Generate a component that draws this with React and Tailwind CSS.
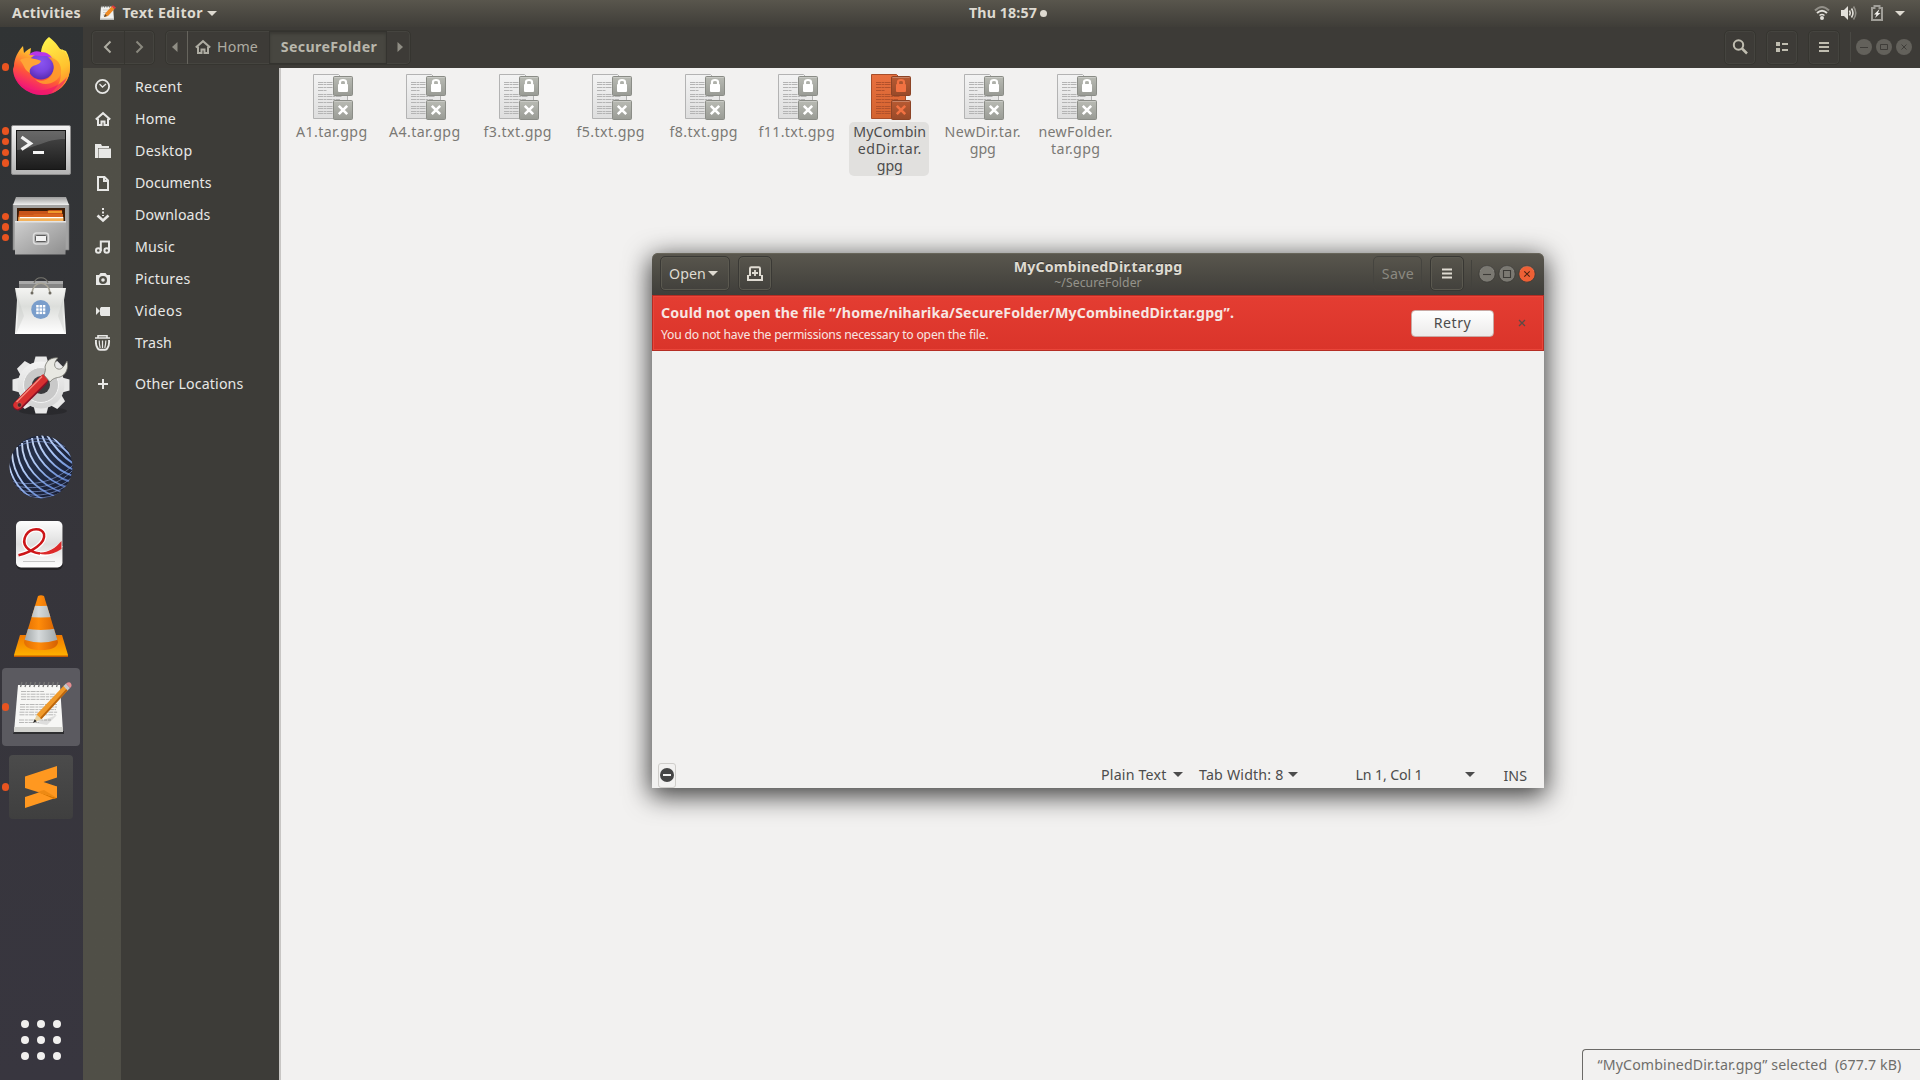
import { useLayoutEffect, useRef, useState } from "react";

/* Single line of text, tracked so that it fills the given width. */
function T({ w, className = "", children }) {
  const ref = useRef(null);
  const [spacing, setSpacing] = useState(0);
  useLayoutEffect(() => {
    const natural = ref.current.getBoundingClientRect().width;
    setSpacing((w + 1.5 - natural) / children.length);
  }, [w, children]);
  return (
    <span className={"block shrink-0 whitespace-pre " + className} style={{ width: w + 1.5 }}>
      <span ref={ref} className="inline-block" style={{ letterSpacing: spacing }}>
        {children}
      </span>
    </span>
  );
}

function Down({ className = "" }) {
  return (
    <svg className={"shrink-0 " + className} width="10" height="5" viewBox="0 0 10 5">
      <path d="M0 0h10L5 5z" fill="currentColor" />
    </svg>
  );
}

/* ---------- dock artwork ---------- */
function Firefox() {
  return (
    <svg width="64" height="64" viewBox="0 0 64 64">
      <defs>
        <linearGradient id="ffA" x1=".8" y1="0" x2=".3" y2="1">
          <stop offset="0" stopColor="#fff44f" />
          <stop offset=".35" stopColor="#ffb02e" />
          <stop offset=".62" stopColor="#ff5a36" />
          <stop offset=".85" stopColor="#f5246a" />
          <stop offset="1" stopColor="#e0128a" />
        </linearGradient>
        <linearGradient id="ffB" x1=".4" y1="0" x2=".7" y2="1">
          <stop offset="0" stopColor="#fff04a" />
          <stop offset=".6" stopColor="#ffc22e" />
          <stop offset="1" stopColor="#ff7a2a" />
        </linearGradient>
        <radialGradient id="ffC" cx=".5" cy=".35" r=".7">
          <stop offset="0" stopColor="#8a55f0" />
          <stop offset=".5" stopColor="#7a44e0" />
          <stop offset="1" stopColor="#5128a8" />
        </radialGradient>
      </defs>
      <path d="M5 31C5 24 9 16 14 11l1 7c2-2 4-4 7-5l-1 7c5-1 9-1 12 0L51 14l6 2c3 5 4 10 4 16 0 16-12 28-28 28S4 47 4 34z" fill="url(#ffA)" />
      <path d="M40 2c8 6 9 10 13 14l1 1-1-3c6 5 8 12 8 18 0 13-8 23-19 26 7-6 10-12 10-20 0-9-4-15-11-19-4-1-9 0-9 0 0-7 3-13 8-17z" fill="url(#ffB)" />
      <circle cx="32" cy="31.5" r="13" fill="url(#ffC)" />
      <path d="M20 20c3-4 8-4.500 12-3 6 0 10 3 12 8-5-5-9-4-12-4z" fill="#b835e8" />
      <path d="M11 25c4-3 11-2 15-1 3 1 5 1 6 2-1 3-5 4-8 5-3 2-4 4-3 7-6-3-5-7-10-13z" fill="#ffa436" />
      <path d="M39 22c6 5 8 12 3 19-4 5-11 6-16 3 7 9 23 5 26-6 1-9-4-15-13-16z" fill="#ff9a2c" opacity=".9" />
      <path d="M5 40c6 12 18 17 30 15 10-2 18-7 23-13-4 11-13 18-25 18S8 51 5 40z" fill="#f0146c" opacity=".6" />
    </svg>
  );
}

function Terminal() {
  return (
    <svg width="64" height="64" viewBox="0 0 64 64">
      <defs>
        <linearGradient id="tmA" x1="0" y1="0" x2="0" y2="1">
          <stop offset="0" stopColor="#f4f4f4" />
          <stop offset="1" stopColor="#b4b4b4" />
        </linearGradient>
        <linearGradient id="tmB" x1="0" y1="0" x2="0" y2="1">
          <stop offset="0" stopColor="#4a4a4a" />
          <stop offset="1" stopColor="#1c1c1c" />
        </linearGradient>
      </defs>
      <rect x="2.500" y="10.500" width="59" height="49" rx="1.500" fill="url(#tmA)" stroke="#8d8d8d" />
      <rect x="7" y="15" width="50" height="40" fill="#161616" />
      <rect x="8" y="16" width="48" height="38" fill="url(#tmB)" />
      <path d="M8 16h48v8C36 24 26 34 8 35z" fill="#fff" opacity=".17" />
      <path d="M12.500 22l9 6.500-9 6" fill="none" stroke="#f2f2f2" strokeWidth="3.300" />
      <rect x="24" y="36" width="11" height="3" fill="#f5f5f5" />
    </svg>
  );
}

function Files() {
  return (
    <svg width="64" height="64" viewBox="0 0 64 64">
      <defs>
        <linearGradient id="flA" x1="0" y1="0" x2="1" y2="1">
          <stop offset="0" stopColor="#cfcfcf" />
          <stop offset="1" stopColor="#8e8e8e" />
        </linearGradient>
        <linearGradient id="flB" x1="0" y1="0" x2="0" y2="1">
          <stop offset="0" stopColor="#9c9c9c" />
          <stop offset="1" stopColor="#efefef" />
        </linearGradient>
      </defs>
      <path d="M4 9h56v46H4z" fill="#a3a3a3" stroke="#777" strokeWidth=".6" />
      <path d="M7 2h50l3 8H4z" fill="url(#flB)" />
      <path d="M8 13h48v16H8z" fill="#3a1c08" />
      <path d="M10 16h28l2-1h13l1 12H9z" fill="#c8541a" />
      <path d="M39 16h14v2H39z" fill="#f09a2c" />
      <path d="M10 20h14l1-1h29v9H9z" fill="#d9631f" />
      <path d="M9.500 22h45v5h-45z" fill="#f3b25c" />
      <path d="M11 22h43v1.200H11z" fill="#fff" />
      <path d="M6 26h51l-.5 33.500H6z" fill="url(#flA)" />
      <path d="M6 26h51v1.500H6z" fill="#e4e4e4" />
      <rect x="24.500" y="38" width="15" height="11" rx="3" fill="#aaa" stroke="#dcdcdc" strokeWidth="1.500" />
      <rect x="26.500" y="40.500" width="11" height="6" rx="1" fill="#f2f2f2" stroke="#5c5c5c" />
    </svg>
  );
}

function Software() {
  return (
    <svg width="64" height="64" viewBox="0 2 64 64">
      <defs>
        <linearGradient id="swA" x1="0" y1="0" x2="0" y2="1">
          <stop offset="0" stopColor="#f4f4f2" />
          <stop offset=".4" stopColor="#dcdedb" />
          <stop offset=".75" stopColor="#f1f1f0" />
          <stop offset="1" stopColor="#fff" />
        </linearGradient>
      </defs>
      <path d="M10 8h44v8H10z" fill="#858585" />
      <path d="M10 8h44v3H10z" fill="#a9a9a9" />
      <path d="M25 10c2-7 12-7 14 0" fill="none" stroke="#77756e" strokeWidth="1.200" />
      <path d="M6 15h51l-2 12 2 34H6l2-34z" fill="url(#swA)" />
      <path d="M6 15l4 20-3 26 8-18z" fill="#c4c7c2" opacity=".35" />
      <path d="M57 15l-4 20 3 26-7-18z" fill="#c4c7c2" opacity=".35" />
      <path d="M23 20C24 7 40 7 41 20" fill="none" stroke="#a9a598" strokeWidth="1.500" />
      <circle cx="23" cy="20" r="1.500" fill="#6d6a61" />
      <circle cx="41" cy="20" r="1.500" fill="#6d6a61" />
      <circle cx="31.700" cy="36.500" r="9.500" fill="#7a9ecb" />
      <g fill="#fff">
        {[27.2, 30.5, 33.8].map((x) => [32, 35.3, 38.6].map((y) => <rect key={x + "-" + y} x={x} y={y} width="2.500" height="2.500" />))}
      </g>
    </svg>
  );
}

function Settings() {
  return (
    <svg width="64" height="64" viewBox="0 1 64 64">
      <defs>
        <linearGradient id="seA" x1="0" y1="0" x2="0" y2="1">
          <stop offset="0" stopColor="#f3f3f3" />
          <stop offset="1" stopColor="#d3d3d3" />
        </linearGradient>
        <linearGradient id="seR" x1="0" y1="0" x2="1" y2="1">
          <stop offset="0" stopColor="#ef5a50" />
          <stop offset=".5" stopColor="#d32a2a" />
          <stop offset="1" stopColor="#96122c" />
        </linearGradient>
      </defs>
      <ellipse cx="34" cy="57" rx="24" ry="4" fill="#000" opacity=".2" />
      <g fill="#e8e8e8">
        {[0, 45, 90, 135, 180, 225, 270, 315].map((a) => (
          <path key={a} d="M24.500 10l2-7.500h11l2 7.500z" transform={`rotate(${a} 32 31)`} />
        ))}
        <circle cx="32" cy="31" r="23.500" fill="url(#seA)" />
      </g>
      <circle cx="32" cy="31" r="17.500" fill="#c9c9c9" stroke="#f4f4f4" />
      <circle cx="32" cy="31" r="9" fill="#3a3a3c" />
      <path d="M9 51.500l25-25" stroke="#8a1026" strokeWidth="10" strokeLinecap="round" />
      <path d="M8.500 51L35 24.500" stroke="#d83030" strokeWidth="8" strokeLinecap="round" />
      <path d="M7.500 48L33 22.500" stroke="#f58a7c" strokeWidth="1.400" />
      <path d="M35 21c1-3 2-6 1-8 1-6 6-10 13-9-5 5-4 10 0 11 4 1 6-3 9-8 2 7-1 14-7 16-4 1-7 1-10 5z" fill="#e8e8e2" stroke="#74746c" strokeWidth=".8" />
      <circle cx="10.500" cy="51" r="2.300" fill="#4a2a2a" stroke="#e06058" strokeWidth=".6" />
    </svg>
  );
}

function Globe() {
  return (
    <svg width="64" height="64" viewBox="0 0 64 64">
      <defs>
        <radialGradient id="glA" cx=".45" cy=".35" r=".65">
          <stop offset="0" stopColor="#26324c" />
          <stop offset="1" stopColor="#1a2036" />
        </radialGradient>
        <linearGradient id="glB" x1="0" y1="0" x2=".8" y2="1">
          <stop offset="0" stopColor="#dfe3ec" />
          <stop offset=".5" stopColor="#a9c4f4" />
          <stop offset=".8" stopColor="#5f83cc" />
          <stop offset="1" stopColor="#47548a" />
        </linearGradient>
        <clipPath id="glC">
          <circle cx="32" cy="32" r="31.500" />
        </clipPath>
      </defs>
      <circle cx="32" cy="32" r="31.500" fill="url(#glA)" />
      <g clipPath="url(#glC)" fill="none" stroke="url(#glB)" strokeWidth="1.900">
        <path d="M-1 26C2 44 12 58 28 66M3 18C4 40 18 58 38 66M8 12C8 34 24 54 48 62M13 8C13 30 30 50 55 58M18 5C19 26 36 46 60 53M23 3C25 22 42 41 62 47M28 1C31 18 46 35 64 41M33 0C37 13 50 28 65 35M38 0C43 9 54 22 65 29M43 1C48 7 56 15 64 23" />
      </g>
      <g clipPath="url(#glC)" fill="none" stroke="#9ab6f0" strokeWidth=".8" opacity=".7">
        <path d="M2 46C20 52 46 48 64 30M4 50C24 56 48 52 64 35M7 54C26 60 50 56 64 41M12 58C28 63 50 59 63 46M18 61C32 65 50 62 61 51M14 7C28 1 44 3 56 12M10 11C26 3 46 6 60 18" />
      </g>
    </svg>
  );
}

function Reader() {
  return (
    <svg width="64" height="64" viewBox="0 0 64 64">
      <defs>
        <linearGradient id="rdA" x1="0" y1="0" x2="0" y2="1">
          <stop offset="0" stopColor="#fdfdfd" />
          <stop offset=".5" stopColor="#dedede" />
          <stop offset="1" stopColor="#fff" />
        </linearGradient>
      </defs>
      <rect x="7" y="8" width="47" height="47" rx="6" fill="#111" opacity=".5" />
      <rect x="7" y="6" width="46.500" height="46.500" rx="5" fill="url(#rdA)" />
      <path d="M14 46.500h32" stroke="#c6c6c6" />
      <path d="M10 40C23 37 37 28 35 19c-2-6-13-7-18 1-5 9 1 17 14 19 9 1 16-4 21-9" fill="none" stroke="#fff" strokeWidth="5" />
      <path d="M9.500 40.300C23 37 37 28 35 19c-2-6-13-7-18 1-5 9 1 17 14 18.500" fill="none" stroke="#cc1518" strokeWidth="2.500" />
      <path d="M24 36c10 4 20 0 28.500-10v8C42 41 32 41 24 36z" fill="#dc2a2a" />
    </svg>
  );
}

function Vlc() {
  return (
    <svg width="64" height="64" viewBox="0 0 64 64">
      <defs>
        <linearGradient id="vlA" x1="0" y1="0" x2="1" y2="0">
          <stop offset="0" stopColor="#d86400" />
          <stop offset=".45" stopColor="#ff8c0a" />
          <stop offset="1" stopColor="#c85400" />
        </linearGradient>
        <linearGradient id="vlB" x1="0" y1="0" x2="1" y2="0">
          <stop offset="0" stopColor="#8c9294" />
          <stop offset=".45" stopColor="#d6dadb" />
          <stop offset="1" stopColor="#92989a" />
        </linearGradient>
        <linearGradient id="vlC" x1="0" y1="0" x2="0" y2="1">
          <stop offset="0" stopColor="#f07800" />
          <stop offset="1" stopColor="#ffb400" />
        </linearGradient>
        <clipPath id="vlK">
          <path d="M29 1q3-1.500 6 0l14 46q-1 8-17 8t-17-8z" />
        </clipPath>
      </defs>
      <path d="M11 40h42l6 20v2H5v-2z" fill="url(#vlC)" />
      <path d="M5 60.500h54V62H5z" fill="#c45a00" />
      <g clipPath="url(#vlK)">
        <path d="M10 0h44v60H10z" fill="url(#vlA)" />
        <path d="M10 9q22 4 44 0v12q-22 3-44 0z" fill="url(#vlB)" />
        <path d="M10 32q22 6 44 0v11q-22 9-44 0z" fill="url(#vlB)" />
      </g>
    </svg>
  );
}

function Gedit() {
  return (
    <svg width="64" height="64" viewBox="0 0 64 64">
      <path d="M5 56h50v3H4z" fill="#2e2e30" />
      <path d="M9 10h42l3 47H5z" fill="#f7f7f5" />
      <path d="M5 52h49v5H5z" fill="#d2d2ce" />
      <path d="M11.500 12L13 7M16 12l1.500-5M20.500 12L22 7M25 12l1.500-5M29.500 12L31 7M34 12l1.500-5M38.500 12L40 7M43 12l1.500-5M47.500 12L49 7" stroke="#777" strokeWidth="1.300" />
      <path d="M12 16.500h23M12 19.200h34M12 21.800h33M12 24.400h30M11 29.500h37M11 32h37M11 34.600h36M10.500 37.200h38M10.500 39.800h36M10 45h32M10 47.500h20" stroke="#b0b0b0" strokeWidth=".9" strokeDasharray="5 .8 3 .8" />
      <path d="M26 48l22-8-10 10z" fill="#000" opacity=".1" />
      <path d="M24.500 47.500l3.500-8.500 5 5z" fill="#e8d3a4" />
      <path d="M24 48l1.700-3.700 2 2z" fill="#222" />
      <path d="M27.500 39.500L55 10.500l4 4.500-26.500 29z" fill="#f09a2a" />
      <path d="M31 43L57.800 13.500l1.200 1.500-26.500 29z" fill="#b9650f" />
      <path d="M54.500 11l2.500-2.500 4 4.500-2.500 2.500z" fill="#c8c8cc" />
      <path d="M57 8.500q3.500-2.500 5 0t-1 4.500z" fill="#e58f92" />
    </svg>
  );
}

function GeditSmall() {
  return (
    <svg width="17" height="16" viewBox="0 0 17 16">
      <path d="M1 1.500h12l1 13H0z" fill="#f1f1ef" />
      <path d="M0 13.500h14V15H0z" fill="#b9b9b6" />
      <path d="M2 .5v2M4.500.5v2M7 .5v2M9.500.5v2M12 .5v2" stroke="#6d6d6a" />
      <path d="M3 5h6M3 7.500h5M3 10h3" stroke="#c4c4c2" strokeWidth=".8" />
      <path d="M4 12l1.500-4 6-6.500L14.500 4l-6.500 7z" fill="#ee8a24" />
      <path d="M4 12l1-3 2 2z" fill="#5a4630" />
      <path d="M11.500 1.500L13 .3l3 2.400L14.500 4z" fill="#e2383a" />
    </svg>
  );
}

function Sublime() {
  return (
    <svg width="64" height="64" viewBox="0 0 64 64">
      <defs>
        <linearGradient id="suA" x1="0" y1="0" x2="0" y2="1">
          <stop offset="0" stopColor="#4b4b4b" />
          <stop offset="1" stopColor="#3f3f3f" />
        </linearGradient>
      </defs>
      <rect width="64" height="64" rx="4" fill="url(#suA)" />
      <path d="M16 42l32-10.500v11L16 53z" fill="#ff9820" />
      <path d="M29 37l19 6-3 1-16-7z" fill="#d97700" />
      <path d="M48 11v11.500L34.500 27 48 31.500V43L16 33V21.500z" fill="#ff9820" />
      <path d="M48 43l-20-6 7-2z" fill="#e58410" opacity=".7" />
    </svg>
  );
}

const dock = [
  { id: "firefox", Icon: Firefox, dots: 1 },
  { id: "terminal", Icon: Terminal, dots: 4 },
  { id: "files", Icon: Files, dots: 3 },
  { id: "software", Icon: Software, dots: 0 },
  { id: "settings", Icon: Settings, dots: 0 },
  { id: "globe", Icon: Globe, dots: 0 },
  { id: "reader", Icon: Reader, dots: 0 },
  { id: "vlc", Icon: Vlc, dots: 0 },
  { id: "gedit", Icon: Gedit, dots: 1, active: true },
  { id: "sublime", Icon: Sublime, dots: 1 },
];

function Dock() {
  return (
    <aside className="flex w-[83px] shrink-0 flex-col bg-linear-to-b from-[#303334] via-[#36353b] to-[#38363f]">
      {dock.map(({ id, Icon, dots, active }) => (
        <div key={id} className="flex h-20 items-center">
          <div className={"ml-[2px] flex h-[78px] w-[78px] items-center rounded " + (active ? "bg-[#5b5a60]" : "")}>
            <div className="flex w-[7px] shrink-0 flex-col gap-[3.300px]">
              {Array.from({ length: dots }, (_, i) => (
                <span key={i} className="h-[7.400px] w-[7.400px] rounded-full bg-[#e95420]" />
              ))}
            </div>
            <Icon />
          </div>
        </div>
      ))}
      <div className="mt-auto mb-5 ml-[21px] grid w-10 grid-cols-3 gap-2">
        {Array.from({ length: 9 }, (_, i) => (
          <span key={i} className="h-2 w-2 rounded-full bg-[#f1f0ee]" />
        ))}
      </div>
    </aside>
  );
}

/* ---------- symbolic icons ---------- */
function Sym({ children, className = "" }) {
  return (
    <svg className={"shrink-0 " + className} width="16" height="16" viewBox="0 0 16 16" fill="none" stroke="currentColor" strokeWidth="2">
      {children}
    </svg>
  );
}
const homeShape = (
  <>
    <path d="M.8 8.600L8 2.200l7.200 6.400" />
    <path d="M3 7.500V14h3.500v-3.500h3V14H13V7.500" />
  </>
);

const places = [
  ["Recent", 45.5, <><circle cx="7.500" cy="7.500" r="6.600" strokeWidth="1.800" /><path d="M4.500 5l3 3 3.500-3" strokeWidth="1.300" /></>],
  ["Home", 39.5, homeShape],
  ["Desktop", 56, <><path d="M0 1h6l1 2h7v2H3v10H0z" fill="currentColor" stroke="none" /><path d="M3.500 5.500H16V15H3.500z" fill="currentColor" stroke="none" /></>],
  ["Documents", 75, <path d="M3 2h6.500L13 5.500V15H3zM9 2v4h4" />],
  ["Downloads", 74, <><path d="M8 1v8" strokeDasharray="2 1.500" /><path d="M2.500 8.500L8 13.500l5.500-5" strokeWidth="2.600" /></>],
  ["Music", 38.5, <><circle cx="3.300" cy="11.500" r="2.300" /><circle cx="11.700" cy="11.500" r="2.300" /><path d="M5.800 12V2.500H14V12" /></>],
  ["Pictures", 54, <><path fillRule="evenodd" d="M1 4h3l1.500-2h5L12 4h3v10H1zM8 5a4 4 0 100 8 4 4 0 000-8z" fill="currentColor" stroke="none" /><circle cx="8" cy="9" r="1.800" fill="currentColor" stroke="none" /></>],
  ["Videos", 46, <path d="M1 4l4 4-4 4zM5 5.500L6 4h9v9H6l-1-1.500z" fill="currentColor" stroke="none" />],
  ["Trash", 35.5, <><path d="M3 3V.8h9V3M0 3h15" strokeWidth="1.600" /><path d="M1 5q-.5 5 1.500 8 .8 1.800 2.500 1.800h5q1.700 0 2.500-1.800 2-3 1.500-8" strokeWidth="1.900" /><path d="M4.200 5.500q0 4 1 7.500M7.500 5.500V13M10.800 5.500q0 4-1 7.500" strokeWidth="1.200" /></>],
];

function Place({ label, w, icon, className = "" }) {
  return (
    <div className={"flex h-8 items-center " + className}>
      <div className="flex w-[38px] justify-center pl-[2px]">
        <Sym>{icon}</Sym>
      </div>
      <T w={w} className="ml-[14px]">{label}</T>
    </div>
  );
}

function FileIcon({ selected }) {
  const page = selected ? "url(#pgS)" : "url(#pgN)";
  const tag = selected ? "url(#tgS)" : "url(#tgN)";
  const line = selected ? "#b2512b" : "#b4b4b4";
  const mark = selected ? "#f27242" : "#fff";
  const edge = selected ? "#8c4426" : "#8b8d87";
  return (
    <svg width="42" height="48" viewBox="0 0 42 48">
      <defs>
        <linearGradient id="pgN" x1="0" y1="0" x2="0" y2="1"><stop offset="0" stopColor="#f3f3f3" /><stop offset="1" stopColor="#dedede" /></linearGradient>
        <linearGradient id="pgS" x1="0" y1="0" x2="0" y2="1"><stop offset="0" stopColor="#e8703f" /><stop offset="1" stopColor="#d4632f" /></linearGradient>
        <linearGradient id="tgN" x1="0" y1="0" x2="0" y2="1"><stop offset="0" stopColor="#b9bbb4" /><stop offset="1" stopColor="#999b95" /></linearGradient>
        <linearGradient id="tgS" x1="0" y1="0" x2="0" y2="1"><stop offset="0" stopColor="#b85a32" /><stop offset="1" stopColor="#984a29" /></linearGradient>
      </defs>
      <path d="M1.500 1.500h25l9 9V45.500h-34z" fill={page} stroke={selected ? "#a84e2a" : "#b3b3b3"} />
      <path d="M6 9.500h18M6 11.500h18M6 14.500h18M6 17.500h9M6 21.500h18M6 23.500h24M6 26.500h22M6 29.500h16M6 33.500h18M6 35.500h16M6 38.500h16M6 40.500h16" stroke={line} strokeDasharray="5 .5 3 .5" />
      <rect x="21.500" y="3.500" width="19" height="19" rx="1" fill={tag} stroke={edge} />
      <rect x="21.500" y="27.500" width="19" height="19" rx="1" fill={tag} stroke={edge} />
      <path d="M22.500 4.500h17M22.500 28.500h17" stroke="#fff" opacity=".25" />
      <rect x="26" y="11" width="10" height="8" rx="1" fill={mark} />
      <path d="M28 12V9q0-2 3-2t3 2v3" fill="none" stroke={mark} strokeWidth="2.200" />
      <path d="M26.800 32.800l8.400 8.400M35.200 32.800l-8.400 8.400" stroke={mark} strokeWidth="2.600" />
    </svg>
  );
}

const files = [
  [["A1.tar.gpg", 70]],
  [["A4.tar.gpg", 70]],
  [["f3.txt.gpg", 67]],
  [["f5.txt.gpg", 67]],
  [["f8.txt.gpg", 67]],
  [["f11.txt.gpg", 75]],
  [["MyCombin", 71.5], ["edDir.tar.", 62.5], ["gpg", 24.5]],
  [["NewDir.tar.", 75], ["gpg", 24.5]],
  [["newFolder.", 73], ["tar.gpg", 48]],
];

function FileItem({ lines, selected }) {
  return (
    <div className="flex w-[93px] flex-col items-center">
      <div className="pl-[4px]">
        <FileIcon selected={selected} />
      </div>
      <div className={"mt-px flex w-20 flex-col items-center rounded-[5px] pt-px pb-px pl-[1.500px] leading-[17.200px] " + (selected ? "bg-[#e1e0de] text-[#4c4c4c]" : "text-[#7b7975]")}>
        {lines.map(([text, w]) => (
          <T key={text} w={w}>{text}</T>
        ))}
      </div>
    </div>
  );
}

const hdrButton = "flex items-center justify-center rounded-[5px] border border-[#363530] shadow-[inset_0_0_0_1px_#45443f]";

function FilesHeader() {
  return (
    <header className="flex h-[41px] shrink-0 items-center bg-[#3d3b37] pr-2 pb-px pl-2 text-[#aeaca2]">
      <div className={"h-[35px] w-16 " + hdrButton}>
        <div className="flex w-8 justify-center pr-px">
          <Sym><path d="M10.500 2.500L5 8l5.500 5.500" /></Sym>
        </div>
        <div className="flex h-full flex-1 items-center justify-center border-l border-[#363530] pr-px text-[#8b897f]">
          <Sym><path d="M5.500 2.500L11 8l-5.500 5.500" /></Sym>
        </div>
      </div>
      <div className={"ml-[10px] h-[35px] w-[246px] " + hdrButton}>
        <div className="flex w-[21px] justify-center pr-[3px]">
          <svg width="6" height="10" viewBox="0 0 6 10"><path d="M5.500 0v10L0 5z" fill="#8f8d84" /></svg>
        </div>
        <div className="flex h-full w-[82px] items-center border-l border-[#66645d] pl-[7px]">
          <Sym>{homeShape}</Sym>
          <T w={39.5} className="ml-[6px]">Home</T>
        </div>
        <div className="flex h-full w-[118px] items-center justify-center border border-[#34332f] bg-[#474640] pl-[2px] font-bold text-[#b9b7ac] shadow-[inset_0_2px_3px_#3a3934]">
          <T w={95}>SecureFolder</T>
        </div>
        <div className="flex flex-1 justify-center pl-[3px]">
          <svg width="6" height="10" viewBox="0 0 6 10"><path d="M.5 0v10L6 5z" fill="#8f8d84" /></svg>
        </div>
      </div>
      <div className="ml-auto flex items-center gap-[10px] text-[#c0bdb0]">
        <div className={"h-[35px] w-8 " + hdrButton}>
          <Sym><circle cx="6.500" cy="6" r="4.700" /><path d="M10 9.500l5 5" strokeWidth="2.500" /></Sym>
        </div>
        <div className={"h-[35px] w-8 " + hdrButton}>
          <Sym><path d="M2 3h4v4H2zM2 9h4v4H2zM8 4h6v2H8zM8 10h6v2H8z" fill="currentColor" stroke="none" /></Sym>
        </div>
        <div className={"h-[35px] w-8 " + hdrButton}>
          <Sym><path d="M3 4h10M3 8h10M3 12h10" /></Sym>
        </div>
        <div className="h-[30px] w-px bg-[#4a4944]" />
      </div>
      <div className="ml-[5px] flex gap-1 text-[#3f3d39]">
        {["M4 8.500h8", "M4.500 5.500h7v5h-7z", "M5.500 5.500l5 5M10.500 5.500l-5 5"].map((d) => (
          <svg key={d} width="16" height="16" viewBox="0 0 16 16" fill="none" stroke="currentColor">
            <circle cx="8" cy="8" r="8" fill="#63615b" stroke="none" />
            <path d={d} />
          </svg>
        ))}
      </div>
    </header>
  );
}

function EditorWindow() {
  const btn = "flex items-center justify-center rounded-[5px] border";
  return (
    <section className="absolute top-[253px] left-[652px] flex h-[535px] w-[892px] flex-col rounded-t-[6px] bg-[#f2f1f0] shadow-[0_6px_26px_2px_rgba(0,0,0,0.75)]">
      <header className="grid h-[42px] shrink-0 grid-cols-[1fr_auto_1fr] rounded-t-[6px] bg-linear-to-b from-[#5a574e] to-[#3f3e3a] pt-[3px] text-[#dfdbd2] shadow-[inset_0_1px_0_#68655a]">
        <div className="flex pl-2">
          <div className={btn + " h-[35px] w-[70px] gap-[2px] border-[#3a3935] pr-[3px] shadow-[inset_0_0_0_1px_#5b5950]"}>
            <T w={35.5}>Open</T>
            <Down />
          </div>
          <div className={btn + " ml-2 h-[35px] w-[34px] border-[#3a3935] shadow-[inset_0_0_0_1px_#5b5950]"}>
            <Sym><path d="M3 10V2.500q0-1.200 1.200-1.200h7.600q1.200 0 1.200 1.200V10M1 9v5h14V9" strokeWidth="2" /><path d="M8 4v6M5 7h6" strokeWidth="1.800" /></Sym>
          </div>
        </div>
        <div className="flex flex-col items-center pt-px">
          <T w={167} className="font-bold leading-[20px] text-shadow-[0_-1px_0_#333]">MyCombinedDir.tar.gpg</T>
          <T w={86} className="-mt-[2px] text-[12.200px] leading-[15px] text-[#95938b]">~/SecureFolder</T>
        </div>
        <div className="flex justify-end pr-2">
          <div className={btn + " h-[35px] w-[49px] border-[#45443f] pl-px text-[#8b8981]"}>
            <T w={31}>Save</T>
          </div>
          <div className={btn + " ml-2 h-[35px] w-[34px] border-[#383733] shadow-[inset_0_0_0_1px_#5b5950]"}>
            <Sym><path d="M3 3.500h10M3 7.500h10M3 11.500h10" /></Sym>
          </div>
          <div className="mt-1 ml-[7px] h-[28px] w-px bg-[#43423d]" />
          <div className="mt-[9px] ml-[6px] flex gap-[2px]">
            {[
              ["M5 9.500h8", "#7b7972", "#3c3b37"],
              ["M5.500 5.500h7v7h-7z", "#7b7972", "#3c3b37"],
              ["M6.300 6.300l5.400 5.400M11.700 6.300l-5.400 5.400", "#ee6035", "#4a2211"],
            ].map(([d, bg, fg]) => (
              <svg key={d} width="18" height="18" viewBox="0 0 18 18" fill="none">
                <circle cx="9" cy="9" r="8.200" fill={bg} stroke="#3a3935" strokeWidth=".8" />
                <path d="M2 6a7.500 7.500 0 0114 0" stroke="#fff" opacity=".15" />
                <path d={d} stroke={fg} strokeWidth="1.100" />
              </svg>
            ))}
          </div>
        </div>
      </header>
      <div className="flex h-14 shrink-0 items-center border border-[#b52d24] bg-linear-to-b from-[#e43d32] to-[#da342a] pl-2 text-[#f7e6e2] shadow-[inset_0_0_0_1px_#ea463a]">
        <div>
          <T w={571.5} className="font-bold leading-[22px]">Could not open the file “/home/niharika/SecureFolder/MyCombinedDir.tar.gpg”.</T>
          <T w={326} className="text-[12.200px] leading-[21px]">You do not have the permissions necessary to open the file.</T>
        </div>
        <div className="mr-[24px] ml-auto flex h-[27px] w-[83px] items-center justify-center rounded border border-[#c9a9a4] bg-linear-to-b from-white to-[#ecebea] text-[#4c4c4c]">
          <T w={36}>Retry</T>
        </div>
        <svg className="mr-[17px]" width="8" height="8" viewBox="0 0 8 8"><path d="M1 1l6 6M7 1L1 7" stroke="#5c4a46" strokeWidth="1.300" /></svg>
      </div>
      <div className="flex-1" />
      <footer className="flex h-7 shrink-0 items-center text-[#4c4c4c]">
        <div className="mt-[2px] ml-[6px] flex h-[25px] w-[18px] items-center justify-center rounded-[3px] border border-[#cfcdca]">
          <svg className="shrink-0" width="14" height="14" viewBox="0 0 14 14"><circle cx="7" cy="7" r="7" fill="#454545" /><path d="M3 7h8" stroke="#f2f1f0" strokeWidth="2" /></svg>
        </div>
        <T w={64} className="mt-[2px] ml-[425px]">Plain Text</T>
        <Down className="ml-[6px]" />
        <T w={83} className="mt-[2px] ml-[16.500px]">Tab Width: 8</T>
        <Down className="ml-[4px]" />
        <T w={65.5} className="mt-[2px] ml-[58px]">Ln 1, Col 1</T>
        <Down className="ml-[42px]" />
        <T w={22} className="mt-[3px] ml-[29px]">INS</T>
      </footer>
    </section>
  );
}

function TopBar() {
  return (
    <div className="grid h-[27px] shrink-0 grid-cols-[1fr_auto_1fr] items-center bg-linear-to-b from-[#59564d] to-[#3f3d38] pb-px font-bold text-[#dedad1]">
      <div className="flex items-center pl-3">
        <T w={67.5}>Activities</T>
        <span className="ml-[19px] flex w-[17px] shrink-0"><GeditSmall /></span>
        <T w={79} className="ml-[5.500px]">Text Editor</T>
        <Down className="ml-1" />
      </div>
      <div className="flex items-center pl-[96px]">
        <T w={66.5}>Thu 18:57</T>
        <span className="ml-[3px] h-[7px] w-[7px] rounded-full bg-[#dedad1]" />
      </div>
      <div className="flex items-center justify-end pr-[15px]">
        <svg width="16" height="16" viewBox="0 0 16 16" fill="none" stroke="#e2e0da" strokeWidth="2">
          <path d="M1 5.500Q8-1.500 15 5.500" opacity=".45" />
          <path d="M3 8q5-4.500 10 0" /><path d="M5.500 10.500q2.500-2 5 0" strokeWidth="1.500" />
          <circle cx="8" cy="13" r="2" fill="#e2e0da" stroke="none" />
        </svg>
        <svg className="ml-[11px]" width="16" height="16" viewBox="0 0 16 16" fill="none" stroke="#e2e0da" strokeWidth="1.600">
          <path d="M0 5h3l4-4v14l-4-4H0z" fill="#e2e0da" stroke="none" />
          <path d="M8.500 5.500q1.500 2.500 0 5M10.500 3.500q3 4.500 0 9" /><path d="M12.500 1.500q4.500 6.500 0 13" opacity=".45" />
        </svg>
        <svg className="ml-[14px]" width="12" height="16" viewBox="0 0 12 16">
          <path d="M1 3h2.500V1h5v2H11v12H1z" fill="none" stroke="#a09e98" strokeWidth="2" />
          <path d="M8.500 4L3 9.500h2.500L4 13l5.500-5H7z" fill="#f0eeea" />
        </svg>
        <Down className="ml-[12px]" />
      </div>
    </div>
  );
}

export default function App() {
  return (
    <div className="relative flex h-[1080px] w-[1920px] flex-col overflow-hidden bg-[#f2f1f0] font-['Noto_Sans','Open_Sans',sans-serif] text-[14.200px] leading-[20px]">
      <TopBar />
      <div className="flex min-h-0 flex-1">
        <Dock />
        <div className="flex min-w-0 flex-1 flex-col">
          <FilesHeader />
          <div className="flex min-h-0 flex-1">
            <nav className="w-[198px] shrink-0 border-r-2 border-[#c8c6c4] bg-linear-to-r from-[#504f47] from-[38px] to-[#3d3c38] to-[38px] pt-[3px] text-[#e8e8e6]">
              {places.map(([label, w, icon]) => (
                <Place key={label} label={label} w={w} icon={icon} />
              ))}
              <Place label="Other Locations" w={107} icon={<path d="M3 8h10M8 3v10" />} className="mt-[9px]" />
            </nav>
            <main className="flex min-w-0 flex-1 flex-col justify-between">
              <div className="flex items-start pt-[5px] pl-[3.500px]">
                {files.map((lines, i) => (
                  <FileItem key={i} lines={lines} selected={i === 6} />
                ))}
              </div>
              <div className="flex h-[31px] w-[338px] items-center self-end rounded-tl border-t border-l border-[#6b6a67] pb-px pl-[14.500px] text-[#6f6e6b]">
                <T w={302.5}>“MyCombinedDir.tar.gpg” selected  (677.7 kB)</T>
              </div>
            </main>
          </div>
        </div>
      </div>
      <EditorWindow />
    </div>
  );
}
